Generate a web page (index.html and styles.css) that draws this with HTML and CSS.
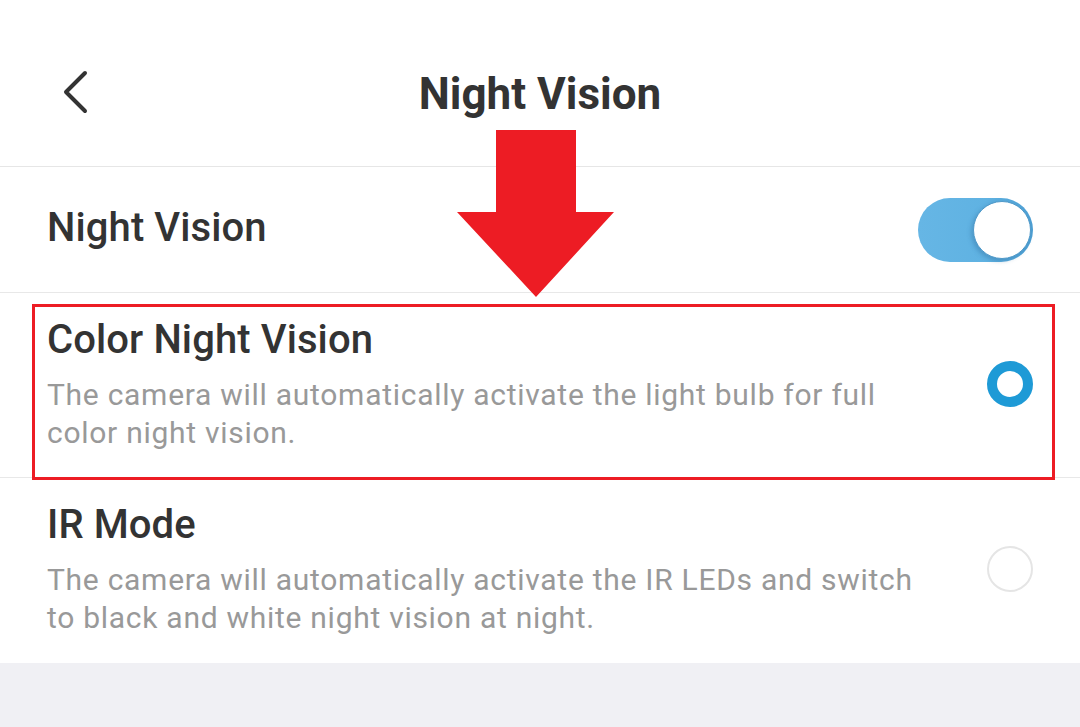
FILE: index.html
```html
<!DOCTYPE html>
<html lang="en">
<head>
  <meta charset="UTF-8" />
  <title>Night Vision</title>
  <link rel="stylesheet" href="styles.css">
</head>
<body>
  <div class="page">
    <header class="topbar">
      <div class="back">
        <svg width="28" height="44" viewBox="0 0 28 44">
          <path d="M24 3 L5 22 L24 41" fill="none" stroke="#333" stroke-width="4" stroke-linecap="round" stroke-linejoin="round"/>
        </svg>
      </div>
      <h1 class="title">Night Vision</h1>
    </header>

    <div class="list">
      <div class="row row-switch">
        <div class="label">Night Vision</div>
        <div class="toggle on"><div class="knob"></div></div>
      </div>

      <div class="row row-option">
        <div class="text">
          <div class="label">Color Night Vision</div>
          <div class="desc">The camera will automatically activate the light bulb for full color night vision.</div>
        </div>
        <div class="radio checked"></div>
      </div>

      <div class="row row-option last">
        <div class="text">
          <div class="label">IR Mode</div>
          <div class="desc">The camera will automatically activate the IR LEDs and switch to black and white night vision at night.</div>
        </div>
        <div class="radio"></div>
      </div>
    </div>

    <div class="footer-space"></div>

    <!-- annotation overlays -->
    <div class="highlight"></div>
    <svg class="arrow" width="160" height="170" viewBox="0 0 160 170">
      <polygon points="39,0 119,0 119,82 157,82 79,167 0,82 39,82" fill="#ed1c24"/>
    </svg>
  </div>
</body>
</html>
```

FILE: styles.css
```css
* {
  margin: 0;
  padding: 0;
  box-sizing: border-box;
}

html, body {
  height: 100%;
  font-family: Roboto, 'Noto Sans', sans-serif;
  background: #f0f0f4;
  color: #333;
  overflow: hidden;
}

.page {
  position: relative;
  width: 1080px;
  height: 727px;
}

.topbar {
  position: relative;
  height: 167px;
  background: #fff;
  border-bottom: 1px solid #e6e6e6;
  display: flex;
  align-items: center;
  justify-content: center;
}

.back {
  position: absolute;
  left: 61px;
  top: 70px;
  width: 28px;
  height: 44px;
}

.title {
  font-size: 44px;
  font-weight: 700;
  color: #333;
  margin-top: 22px;
}

.list {
  background: #fff;
}

.row {
  display: flex;
  align-items: center;
  justify-content: space-between;
  padding: 0 47px;
  border-bottom: 1px solid #e8e8e8;
}

.row.last {
  border-bottom: none;
}

.label {
  font-size: 40px;
  font-weight: 500;
  letter-spacing: 0.1px;
  color: #333;
  line-height: 44px;
}

.row-switch {
  height: 126px;
}

.row-switch .label {
  margin-top: -4px;
}

.toggle {
  width: 115px;
  height: 64px;
  border-radius: 32px;
  background: linear-gradient(90deg, #66b6e5 0%, #5fb2e2 60%, #4d9fd3 100%);
  position: relative;
}

.toggle .knob {
  position: absolute;
  right: 2px;
  top: 3px;
  width: 58px;
  height: 58px;
  border-radius: 50%;
  background: #fff;
  border: 1px solid #4f99c9;
  box-shadow: -2px 2px 4px rgba(40, 100, 150, 0.35);
}

.row-option {
  height: 185px;
  align-items: flex-start;
  padding-top: 25px;
}

.row-option .text {
  width: 880px;
}

.desc {
  margin-top: 14px;
  font-size: 30px;
  letter-spacing: 0.72px;
  line-height: 38px;
  color: #999;
}

.radio {
  width: 46px;
  height: 46px;
  border-radius: 50%;
  border: 2px solid #e5e5e5;
  margin-top: 43px;
  flex-shrink: 0;
}

.radio.checked {
  border: 10px solid #1e9ad6;
}

.footer-space {
  height: 66px;
  background: #f0f0f4;
}

.highlight {
  position: absolute;
  left: 32px;
  top: 304px;
  width: 1023px;
  height: 176px;
  border: 3px solid #ed1c24;
}

.arrow {
  position: absolute;
  left: 457px;
  top: 130px;
}
```
